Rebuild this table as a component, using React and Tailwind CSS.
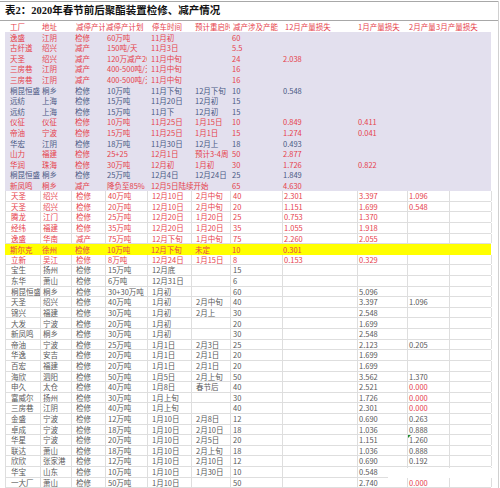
import React from "react";

const W = ["w-[35px]", "w-[31px]", "w-[34px]", "w-[42px]", "w-[44px]", "w-[39px]", "w-[52px]", "w-[75px]", "w-[50px]", "w-[42px]", "w-[42px]"];
const PL = ["pl-[5px]", "pl-[2px]", "pl-[4px]", "pl-[2px]", "pl-[4px]", "pl-[4px]", "pl-[2px]", "pl-[1px]", "pl-[1px]", "pl-[1px]", "pl-[1px]"];

const HW = ["w-[35px]", "w-[31px]", "w-[34px]", "w-[42px]", "w-[44px]", "w-[39px]", "w-[52px]", "w-[75px]", "w-[50px]", "w-[28px]", "w-[56px]"];
const HPL = ["pl-[5px]", "pl-[2px]", "pl-[5px]", "pl-[1px]", "pl-[5px]", "pl-[4px]", "pl-[3px]", "pl-[3px]", "pl-[1px]", "pl-[2px]", "pl-[1px]"];

const COLOR = {
  red: "text-[#e6424c]",
  blue: "text-[#4a5984]",
  gray: "text-[#595959]",
};

const header = ["工厂", "地址", "减停产计划", "减停产计划", "停车时间", "预计重启时间", "减产涉及产能", "12月产量损失", "1月产量损失", "2月产量损失", "3月产量损失"];

const rows = [
  { t: "lav", c: "red", d: ["逸盛", "江阴", "检修", "60万吨", "11月初", "", "60", "", "", "", ""] },
  { t: "lav", c: "red", d: ["古纤道", "绍兴", "减产", "150吨/天", "11月3日", "", "5.5", "", "", "", ""] },
  { t: "lav", c: "red", d: ["天圣", "绍兴", "减产", "120万减产20%", "11月中旬", "", "24", "2.038", "", "", ""] },
  { t: "lav", c: "red", d: ["三房巷", "江阴", "减产", "400-500吨/天", "11月中旬", "", "16", "", "", "", ""] },
  { t: "lav", c: "red", d: ["三房巷", "江阴", "减产", "400-500吨/天", "11月中旬", "", "16", "", "", "", ""] },
  { t: "lav", c: "blue", d: ["桐昆恒盛", "桐乡", "检修", "10万吨", "11月下旬", "12月下旬", "10", "0.548", "", "", ""] },
  { t: "lav", c: "blue", d: ["远纺", "上海", "检修", "15万吨", "11月20日", "12月初", "15", "", "", "", ""] },
  { t: "lav", c: "blue", d: ["远纺", "上海", "检修", "15万吨", "11月下", "12月初", "15", "", "", "", ""] },
  { t: "lav", c: "red", d: ["仪征", "仪征", "检修", "10万吨", "11月25日", "1月15日", "10", "0.849", "0.411", "", ""] },
  { t: "lav", c: "red", d: ["帝油", "宁波", "检修", "15万吨", "11月25日", "1月1日", "15", "1.274", "0.041", "", ""] },
  { t: "lav", c: "blue", d: ["华宏", "江阴", "检修", "18万吨", "11月30日", "12月上", "18", "0.493", "", "", ""] },
  { t: "lav", c: "red", d: ["山力", "福建", "检修", "25+25", "12月1日", "预计3-4周", "50", "2.877", "", "", ""] },
  { t: "lav", c: "red", d: ["华润", "珠海", "检修", "30万吨", "12月初", "1月初", "30", "1.726", "0.822", "", ""] },
  { t: "lav", c: "blue", d: ["桐昆恒盛", "桐乡", "检修", "25万吨", "12月4日", "12月24日", "25", "1.849", "", "", ""] },
  { t: "lav", c: "red", d: ["新凤鸣", "桐乡", "减产", "降负至85%", "12月5日陆续开始", "", "65", "4.630", "", "", ""] },
  { t: "white", c: "red", d: ["天圣", "绍兴", "检修", "40万吨", "12月10日", "2月中旬", "40", "2.301", "3.397", "1.096", ""] },
  { t: "white", c: "red", d: ["天圣", "绍兴", "检修", "20万吨", "12月10日", "2月中旬", "20", "1.151", "1.699", "0.548", ""] },
  { t: "white", c: "red", d: ["腾龙", "江门", "检修", "25万吨", "12月20日", "1月20日", "25", "0.753", "1.370", "", ""] },
  { t: "white", c: "red", d: ["经纬", "福建", "检修", "35万吨", "12月20日", "1月20日", "35", "1.055", "1.918", "", ""] },
  { t: "white", c: "red", d: ["逸盛", "华南", "减产", "75万吨", "12月下旬", "1月中旬", "75", "2.260", "2.055", "", ""] },
  { t: "yellow", c: "red", d: ["斯尔克", "徐州", "检修", "10万吨", "12月下旬", "未定", "10", "0.301", "", "", ""] },
  { t: "white", c: "red", d: ["立新", "吴江", "检修", "8万吨", "12月24日", "1月15日", "8", "0.153", "0.329", "", ""] },
  { t: "white", c: "gray", d: ["宝生", "扬州", "检修", "15万吨", "12月底", "", "15", "", "", "", ""] },
  { t: "white", c: "gray", d: ["东华", "萧山", "检修", "6万吨", "12月31日", "", "6", "", "", "", ""] },
  { t: "white", c: "gray", d: ["桐昆恒盛", "桐乡", "检修", "30+30万吨", "1月初", "", "60", "", "5.096", "", ""] },
  { t: "white", c: "gray", d: ["天圣", "绍兴", "检修", "40万吨", "1月初", "2月中旬", "40", "", "3.397", "1.096", ""] },
  { t: "white", c: "gray", d: ["锦兴", "福建", "检修", "30万吨", "1月初", "2月上", "30", "", "2.548", "", ""] },
  { t: "white", c: "gray", d: ["大发", "宁波", "检修", "20万吨", "1月初", "", "20", "", "1.699", "", ""] },
  { t: "white", c: "gray", d: ["新凤鸣", "桐乡", "检修", "30万吨", "1月初", "", "30", "", "2.548", "", ""] },
  { t: "white", c: "gray", d: ["帝油", "宁波", "检修", "25万吨", "1月1日", "2月3日", "25", "", "2.123", "0.205", ""] },
  { t: "white", c: "gray", d: ["华逸", "安吉", "检修", "20万吨", "1月1日", "2月1日", "20", "", "1.699", "", ""] },
  { t: "white", c: "gray", d: ["百宏", "福建", "检修", "20万吨", "1月1日", "2月1日", "20", "", "1.699", "", ""] },
  { t: "white", c: "gray", d: ["海欣", "泗阳", "检修", "50万吨", "1月5日", "2月上旬", "50", "", "3.562", "1.370", ""] },
  { t: "white", c: "gray", d: ["申久", "太仓", "检修", "40万吨", "1月8日", "春节后", "40", "", "2.521", "!0.000", ""] },
  { t: "white", c: "gray", d: ["富威尔", "扬州", "检修", "30万吨", "1月上旬", "", "30", "", "1.726", "!0.000", ""] },
  { t: "white", c: "gray", d: ["三房巷", "江阴", "检修", "40万吨", "1月上旬", "", "40", "", "2.301", "!0.000", ""] },
  { t: "white", c: "gray", d: ["金盛", "宁波", "检修", "12万吨", "1月10日", "2月8日", "12", "", "0.690", "0.263", ""] },
  { t: "white", c: "gray", d: ["卓成", "宁波", "检修", "18万吨", "1月10日", "2月10日", "18", "", "1.036", "0.888", ""] },
  { t: "white", c: "gray", d: ["华星", "宁波", "检修", "20万吨", "1月10日", "2月5日", "20", "", "1.151", "^1.260", ""] },
  { t: "white", c: "gray", d: ["联达", "萧山", "检修", "18万吨", "1月10日", "2月上旬", "18", "", "1.036", "0.888", ""] },
  { t: "white", c: "gray", d: ["欣欣", "张家港", "检修", "12万吨", "1月10日", "2月10日", "12", "", "0.690", "0.192", ""] },
  { t: "white", c: "gray", d: ["华宝", "山东", "检修", "10万吨", "1月10日", "1月30日", "10", "", "0.548", "", ""] },
  { t: "white", c: "gray", d: ["一大厂", "萧山", "检修", "50万吨", "1月10日", "", "50", "", "2.740", "!0.000", ""] },
];

function Row({ row }) {
  const bg =
    row.t === "lav" ? "bg-[#e3e0ee]" : row.t === "yellow" ? "bg-[#ffff00]" : "bg-white border-b border-l border-[#dedede]";
  return (
    <div className={`flex ml-[5px] w-[486px] h-[10.62px] ${bg}`}>
      {row.d.map((v, i) => {
        let text = v;
        let color = COLOR[row.c];
        let flag = false;
        if (text.startsWith("!")) {
          text = text.slice(1);
          color = COLOR.red;
        }
        if (text.startsWith("^")) {
          text = text.slice(1);
          flag = true;
        }
        const next = row.d[i + 1];
        const overflow = next === "" ? "overflow-visible" : "overflow-hidden";
        const border = row.t === "white" ? "border-r border-[#dedede]" : "";
        return (
          <div
            key={i}
            className={`relative shrink-0 ${W[i]} ${PL[i]} ${border} ${overflow} ${color} whitespace-nowrap flex items-center h-full leading-none`}
          >
            {flag && (
              <span className="absolute left-0 top-0 w-0 h-0 border-t-[3px] border-r-[3px] border-t-[#1f8a2e] border-r-transparent" />
            )}
            <span className="relative">{text}</span>
          </div>
        );
      })}
    </div>
  );
}

export default function App() {
  return (
    <div className="relative w-[500px] h-[488px] overflow-hidden bg-white font-['Noto_Sans_CJK_SC','Noto_Sans',sans-serif] text-[7.5px]">
      <div className="w-[499px] h-full border-r border-[#d0d0d0]">
        <div className="mt-[1px] h-[20px] border-t border-b border-[#a8a8a8] flex items-center pl-[5px]">
          <span className="font-['Liberation_Serif','Noto_Sans_CJK_SC',serif] font-bold text-[10.5px] text-[#111] leading-none">
            表2：2020年春节前后聚酯装置检修、减产情况
          </span>
        </div>
        <div className="flex ml-[5px] w-[486px] h-[11px] bg-white text-[#e6424c]">
          {header.map((h, i) => (
            <div key={i} className={`shrink-0 ${HW[i]} ${HPL[i]} overflow-hidden whitespace-nowrap flex items-center h-full leading-none`}>
              {h}
            </div>
          ))}
        </div>
        {rows.map((r, i) => (
          <Row key={i} row={r} />
        ))}
      </div>
      <div className="absolute left-[388px] top-[468px] w-[104px] h-[10px] bg-white" />
    </div>
  );
}
